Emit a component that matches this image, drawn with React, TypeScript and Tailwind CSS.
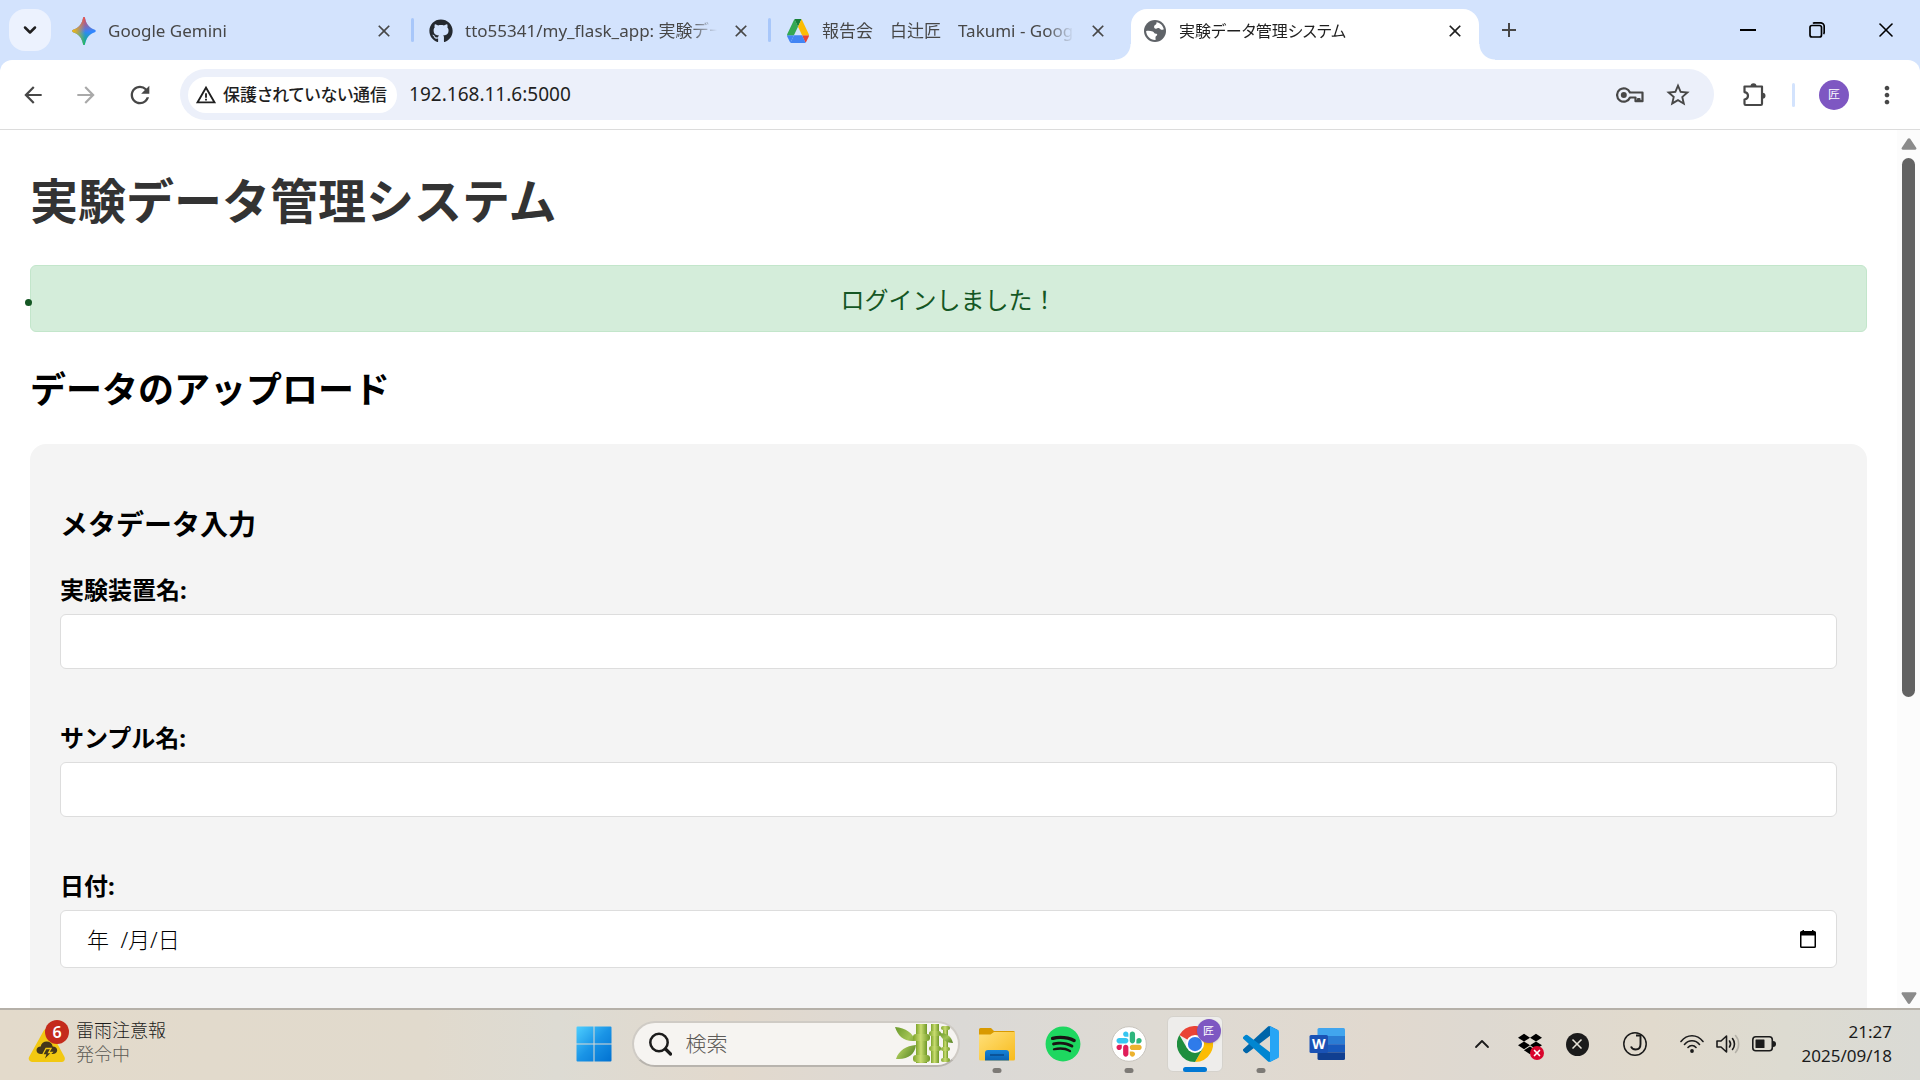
import React from "react";
import { FaGithub, FaSpotify, FaDropbox } from "react-icons/fa";
import { MdStarBorder, MdRefresh, MdArrowBack, MdArrowForward, MdWarningAmber, MdMoreVert, MdClose, MdAdd } from "react-icons/md";
import { ChevronDown, ChevronUp, X } from "lucide-react";

const UI_FONT = "font-['Noto_Sans','Noto_Sans_CJK_JP',sans-serif]";

function GeminiIcon() {
  return (
    <svg viewBox="0 0 24 24" className="h-7 w-6" preserveAspectRatio="none" aria-hidden="true">
      <defs>
        <linearGradient id="gem-a" x1="0" y1="0.5" x2="0.55" y2="0.5">
          <stop offset="0" stopColor="#fbbc04" />
          <stop offset="1" stopColor="#fbbc04" stopOpacity="0" />
        </linearGradient>
        <linearGradient id="gem-b" x1="0.5" y1="0" x2="0.6" y2="0.55">
          <stop offset="0" stopColor="#f94543" />
          <stop offset="1" stopColor="#f94543" stopOpacity="0" />
        </linearGradient>
        <linearGradient id="gem-c" x1="0.5" y1="1" x2="0.6" y2="0.5">
          <stop offset="0" stopColor="#0ebc5f" />
          <stop offset="1" stopColor="#0ebc5f" stopOpacity="0" />
        </linearGradient>
      </defs>
      {["#3186ff", "url(#gem-c)", "url(#gem-b)", "url(#gem-a)"].map((fill) => (
        <path key={fill} fill={fill} d="M12 0c.7 0 .9.6 1.1 1.3.5 2 1.300 3.900 2.800 5.600 1.700 1.900 3.800 3.200 6.300 3.900.8.2 1.500.4 1.500 1.200s-.7 1-1.500 1.200c-2.500.7-4.600 2-6.300 3.900-1.500 1.700-2.300 3.600-2.800 5.600-.2.700-.4 1.300-1.100 1.300s-.9-.6-1.100-1.300c-.5-2-1.300-3.900-2.800-5.600-1.700-1.900-3.800-3.200-6.300-3.900C1 13 .3 12.800.3 12s.7-1 1.500-1.200c2.500-.7 4.600-2 6.300-3.900 1.500-1.700 2.300-3.600 2.800-5.600C11.100.6 11.300 0 12 0z" />
      ))}
    </svg>
  );
}

function DriveIcon() {
  return (
    <svg viewBox="0 0 87.3 78" className="h-6 w-[22px]" preserveAspectRatio="none" aria-hidden="true">
      <path fill="#4285f4" d="M6.600 66.850l3.850 6.650c.8 1.400 1.950 2.500 3.300 3.300l13.750-23.800H0c0 1.550.4 3.100 1.200 4.500z" />
      <path fill="#34a853" d="M43.650 25L29.900 1.200c-1.350.8-2.500 1.900-3.300 3.300L1.200 48.500A9 9 0 0 0 0 53h27.500z" />
      <path fill="#ea4335" d="M73.550 76.800c1.350-.8 2.500-1.900 3.300-3.300l9.250-16c.8-1.400 1.200-2.950 1.200-4.500H59.800l5.850 11.500z" />
      <path fill="#188038" d="M43.650 25L57.400 1.200C56.050.4 54.500 0 52.900 0H34.400c-1.600 0-3.150.45-4.500 1.200z" />
      <path fill="#4285f4" d="M59.800 53H27.500L13.750 76.800c1.350.8 2.900 1.200 4.500 1.200h50.800c1.600 0 3.150-.45 4.500-1.200z" />
      <path fill="#fbbc04" d="M73.400 26.500l-12.700-22c-.8-1.400-1.950-2.500-3.300-3.300L43.650 25 59.800 53h27.450c0-1.550-.4-3.100-1.200-4.500z" />
    </svg>
  );
}

function GlobeIcon() {
  return (
    <svg viewBox="0 0 24 24" className="size-6" aria-hidden="true">
      <circle cx="12" cy="12" r="11" fill="#5f6368" />
      <path fill="#fff" d="M13.500 3.200c3.600.6 6.500 3.400 7.300 7-1 .5-2 .8-3 .4-.9-.4-1-1.400-2-1.500-1.300-.1-1.700.9-3 .7-1.300-.2-1.900-1.300-1.700-2.400.2-1.300 1.800-1.300 2.200-2.300.2-.6.100-1.300.2-1.900zM3.100 12c2.200-.3 4.600-.2 6.600.5 1.400.5 1.200 1.700 2.400 2.100 1 .3 1.900.1 2.100 1 .2 1.100-1.400 1.400-1.700 2.500-.2.900.2 1.800.1 2.800-5 .3-9.300-3.700-9.500-8.900z" />
    </svg>
  );
}

function KeyIcon() {
  return (
    <svg viewBox="0 0 28 16" className="h-4 w-7" aria-hidden="true">
      <path fill="none" stroke="#474747" strokeWidth="2.200" strokeLinejoin="round" d="M14 5.500a6.700 6.700 0 1 0 0 5h5.500v3.700h2.500V12h1.500v2.200h3V5.500z" />
      <circle cx="7.800" cy="8" r="3" fill="#474747" />
    </svg>
  );
}

function PuzzleIcon() {
  return (
    <svg viewBox="0 0 28 28" className="size-7" aria-hidden="true">
      <path fill="none" stroke="#474747" strokeWidth="2.200" strokeLinejoin="round" d="M4.500 5.500H22v17.300c0 .8-.4 1.200-1.200 1.200H5.700c-.8 0-1.200-.4-1.200-1.200v-4.300c2.200-.3 3.500-1.700 3.500-3.700s-1.300-3.400-3.500-3.700z" />
      <path fill="#474747" d="M10.500 5.200a3 3 0 0 1 6 0zM22.500 11.800a3 3 0 0 1 0 6z" />
    </svg>
  );
}

function WeatherIcon() {
  return (
    <svg viewBox="0 0 44 44" className="size-11" aria-hidden="true">
      <path fill="#f2c811" d="M15.800 10.500c1.500-2.400 4.900-2.400 6.300 0l14.300 26.300c1.200 2.300 0 5.200-2.700 5.200H4c-2.600 0-4.200-2.900-2.800-5.200z" />
      <path fill="#43371b" d="M13 34c-2.700 0-4.500-1.600-4.500-3.800s1.800-3.800 4.200-3.800c.6-3.200 3-5 6-5s5.500 1.800 6 5c2.600 0 4.500 1.600 4.500 3.800S27.300 34 24.700 34z" />
      <path fill="#43371b" stroke="#f2c811" strokeWidth="1.300" d="M18 28.500h5l-2.300 4h3.300L15.500 41l2-6h-3z" />
      <circle cx="29" cy="12" r="12" fill="#c42b1c" />
      <text x="29" y="17.500" textAnchor="middle" fill="#fff" fontSize="16" fontWeight="600" fontFamily="Noto Sans, sans-serif">6</text>
    </svg>
  );
}

function WindowsIcon() {
  return (
    <svg viewBox="0 0 36 36" className="size-9" aria-hidden="true">
      <defs>
        <linearGradient id="win" gradientUnits="userSpaceOnUse" x1="0" y1="0" x2="36" y2="36">
          <stop offset="0" stopColor="#4fd0ff" />
          <stop offset="0.5" stopColor="#1a94e6" />
          <stop offset="1" stopColor="#0070d0" />
        </linearGradient>
      </defs>
      <path fill="url(#win)" d="M1.500.5h16v17h-17v-16a1 1 0 0 1 1-1zM18.500.5h16a1 1 0 0 1 1 1v16h-17zM.5 18.500h17v17h-16a1 1 0 0 1-1-1zM18.500 18.500h17v16a1 1 0 0 1-1 1h-16z" />
    </svg>
  );
}

function BambooIcon() {
  return (
    <svg viewBox="0 0 60 40" className="h-10 w-[60px]" aria-hidden="true">
      <defs>
        <linearGradient id="stalk" x1="0" x2="1" y1="0" y2="0">
          <stop offset="0" stopColor="#7fa52d" />
          <stop offset="0.45" stopColor="#c9dc70" />
          <stop offset="1" stopColor="#6f9826" />
        </linearGradient>
        <linearGradient id="leaf" x1="0" x2="1" y1="0" y2="1">
          <stop offset="0" stopColor="#6b9a2c" />
          <stop offset="0.5" stopColor="#a3c455" />
          <stop offset="1" stopColor="#4e7d1d" />
        </linearGradient>
      </defs>
      <path fill="url(#leaf)" d="M1 3c11 1 18 6 20 14C10 18 4 12 1 3zM2 35c3-9 10-13 20-14-1 9-8 15-20 14z" />
      <g fill="url(#stalk)">
        <rect x="22" y="0" width="11" height="39" />
        <rect x="19" y="10" width="17" height="7" rx="3" />
        <rect x="19" y="31" width="17" height="7" rx="3" />
        <rect x="37" y="0" width="8" height="39" />
        <rect x="35" y="7" width="12" height="5" rx="2.500" />
        <rect x="35" y="22" width="12" height="5" rx="2.500" />
        <rect x="49" y="2" width="5" height="35" />
        <rect x="47" y="2" width="9" height="4" rx="2" />
        <rect x="47" y="23" width="9" height="4" rx="2" />
        <rect x="47" y="34" width="9" height="4" rx="2" />
      </g>
      <path fill="url(#leaf)" d="M45 9c8 0 12 3 14 10-6 0-11-3-14-10z" />
    </svg>
  );
}

function FolderIcon() {
  return (
    <svg viewBox="0 0 36 36" className="size-9" aria-hidden="true">
      <defs>
        <linearGradient id="folder" x1="0" y1="0" x2="1" y2="1">
          <stop offset="0" stopColor="#ffe07a" />
          <stop offset="1" stopColor="#f8bb1c" />
        </linearGradient>
        <linearGradient id="folder-blue" x1="0" y1="0" x2="0" y2="1">
          <stop offset="0" stopColor="#1683d8" />
          <stop offset="1" stopColor="#0a63b4" />
        </linearGradient>
      </defs>
      <path fill="#d99a00" d="M0 3.500A1.500 1.500 0 0 1 1.500 2H12l3 3h19.500A1.500 1.500 0 0 1 36 6.500V12H0z" />
      <path fill="url(#folder)" d="M0 8.500h11.500L15 6h21v27a1.500 1.500 0 0 1-1.500 1.500h-33A1.500 1.500 0 0 1 0 33z" />
      <path fill="url(#folder-blue)" d="M6 34.500V27a3 3 0 0 1 3-3h18a3 3 0 0 1 3 3v7.500z" />
      <path stroke="#084a8a" strokeWidth="1.500" d="M11 29h14" />
    </svg>
  );
}

function SlackIcon() {
  return (
    <svg viewBox="0 0 36 36" className="size-9" aria-hidden="true">
      <circle cx="18" cy="18" r="17.300" fill="#fff" stroke="#c9c5be" />
      <g transform="translate(5.500 5.500) scale(.205)">
        <path fill="#e01e5a" d="M25.800 77.600c0 7.100-5.800 12.900-12.900 12.900S0 84.700 0 77.600s5.800-12.900 12.900-12.900h12.900zM32.300 77.600c0-7.100 5.800-12.900 12.900-12.900s12.900 5.800 12.900 12.900v32.300c0 7.100-5.800 12.900-12.900 12.900s-12.900-5.800-12.900-12.900z" />
        <path fill="#36c5f0" d="M45.200 25.800c-7.100 0-12.900-5.800-12.900-12.900S38.100 0 45.200 0s12.900 5.800 12.900 12.900v12.900zM45.200 32.300c7.100 0 12.900 5.800 12.900 12.900s-5.800 12.900-12.900 12.900H12.900C5.800 58.100 0 52.300 0 45.200s5.800-12.900 12.900-12.900z" />
        <path fill="#2eb67d" d="M97 45.200c0-7.100 5.800-12.900 12.900-12.900s12.900 5.800 12.900 12.900-5.800 12.900-12.900 12.900H97zM90.500 45.200c0 7.100-5.800 12.900-12.900 12.900s-12.900-5.800-12.900-12.900V12.900C64.700 5.800 70.500 0 77.600 0s12.900 5.800 12.900 12.900z" />
        <path fill="#ecb22e" d="M77.600 97c7.100 0 12.900 5.800 12.900 12.900s-5.800 12.900-12.900 12.900-12.900-5.800-12.900-12.900V97zM77.600 90.500c-7.100 0-12.900-5.800-12.900-12.900s5.800-12.900 12.900-12.900h32.300c7.100 0 12.900 5.800 12.900 12.900s-5.800 12.900-12.900 12.900z" />
      </g>
    </svg>
  );
}

function ChromeIcon() {
  return (
    <svg viewBox="0 0 48 48" className="size-9" aria-hidden="true">
      <path fill="#ea4335" d="M24 24L3.200 12A24 24 0 0 1 44.800 12H24z" />
      <path fill="#fbbc04" d="M24 12h20.800A24 24 0 0 1 24 48l10.400-18z" />
      <path fill="#1e8e3e" d="M3.200 12A24 24 0 0 0 24 48l10.400-18L24 24l-10.400 6z" />
      <circle cx="24" cy="24" r="12" fill="#fff" />
      <circle cx="24" cy="24" r="9.500" fill="#2f7bea" />
    </svg>
  );
}

function VsCodeIcon() {
  return (
    <svg viewBox="0 0 100 100" className="size-9" aria-hidden="true">
      <path fill="#0065a9" d="M96.500 10.800L75.900.9a6.200 6.200 0 0 0-7.100 1.200L1.300 63.600a4.200 4.200 0 0 0 0 6.200l5.500 5a4.200 4.200 0 0 0 5.400.2l81.200-61.700c2.700-2 6.600-.1 6.600 3.300v-.2a6.300 6.300 0 0 0-3.500-5.600z" />
      <path fill="#0086d1" d="M96.500 89.200l-20.600 9.900a6.200 6.200 0 0 1-7.100-1.200L1.300 36.400a4.200 4.200 0 0 1 0-6.200l5.500-5a4.200 4.200 0 0 1 5.400-.2l81.200 61.700c2.700 2 6.600.1 6.600-3.300v.2a6.300 6.300 0 0 1-3.500 5.600z" />
      <path fill="#27a5f5" d="M75.900 99.100a6.200 6.200 0 0 1-7.100-1.200c2.300 2.300 6.200.7 6.200-2.600V4.700c0-3.300-3.900-4.900-6.200-2.600A6.200 6.200 0 0 1 75.900.9l20.600 9.900A6.200 6.200 0 0 1 100 16.400v67.200c0 2.400-1.400 4.600-3.500 5.600z" />
    </svg>
  );
}

function WordIcon() {
  return (
    <svg viewBox="0 0 36 36" className="size-9" aria-hidden="true">
      <path fill="#41a5ee" d="M10 2h24.500A1.500 1.500 0 0 1 36 3.500V10H8.500V3.500A1.500 1.500 0 0 1 10 2z" />
      <path fill="#2b7cd3" d="M8.500 10H36v8.200H8.500z" />
      <path fill="#185abd" d="M8.500 18.200H36v8H8.500z" />
      <path fill="#103f91" d="M8.500 26.200H36v6.300a1.500 1.500 0 0 1-1.500 1.500H10a1.500 1.500 0 0 1-1.500-1.500z" />
      <rect x="0.500" y="9" width="18.500" height="18" rx="1.500" fill="#1a52b5" />
      <text x="9.700" y="23" textAnchor="middle" fill="#fff" fontSize="14" fontWeight="700" fontFamily="Open Sans, sans-serif">W</text>
    </svg>
  );
}

function WifiIcon() {
  return (
    <svg viewBox="0 0 24 20" className="h-5 w-6" fill="none" stroke="#1b1b1b" strokeWidth="1.600" strokeLinecap="round" aria-hidden="true">
      <path d="M1 7.500C7-.2 17-.2 23 7.500M4.500 10.500c4-5 11-5 15 0M8 13.500c2.200-2.700 5.800-2.700 8 0" />
      <circle cx="12" cy="17" r="1.900" fill="#1b1b1b" stroke="none" />
    </svg>
  );
}

function VolumeIcon() {
  return (
    <svg viewBox="0 0 24 20" className="h-5 w-6" fill="none" stroke="#1b1b1b" strokeWidth="1.600" strokeLinecap="round" strokeLinejoin="round" aria-hidden="true">
      <path d="M1 7h4l5.500-5v16L5 13H1zM13.500 7c1.300 1.800 1.300 4.200 0 6M16.500 4.500c2.600 3.200 2.600 7.800 0 11" />
      <path stroke="#b4b1a8" d="M19.500 1.500c4.200 4.700 4.200 12.300 0 17" />
    </svg>
  );
}

function BatteryIcon() {
  return (
    <svg viewBox="0 0 24 16" className="h-4 w-6" aria-hidden="true">
      <rect x="0.800" y="0.800" width="19.500" height="14" rx="3" fill="none" stroke="#1b1b1b" strokeWidth="1.600" />
      <rect x="3.500" y="3.500" width="9" height="8.600" rx="0.500" fill="#1b1b1b" />
      <path fill="#1b1b1b" d="M21 5c2 0 3 1 3 3s-1 3-3 3z" />
    </svg>
  );
}

function DateIcon() {
  return (
    <svg viewBox="0 0 16 18" className="h-[18px] w-4" aria-hidden="true">
      <path fill="#000" d="M0 2.500A1.500 1.500 0 0 1 1.500 1H2.500V0H4v1h8V0h1.500v1h1A1.500 1.500 0 0 1 16 2.500v14a1.500 1.500 0 0 1-1.500 1.500h-13A1.500 1.500 0 0 1 0 16.500zM1.500 5.500v11h13v-11z" />
    </svg>
  );
}

type TabProps = { title: string; icon: React.ReactNode; active?: boolean; separator?: boolean };

function Tab({ title, icon, active, separator }: TabProps) {
  return (
    <div className={`relative flex h-[51px] max-w-[357px] min-w-0 flex-1 items-center pr-4 pb-2 pl-[17px] ${active ? "text-base text-[#1f1f1f]" : "text-[17px] text-[#474747]"}`}>
      {active && (
        <div className="absolute inset-y-0 right-1 left-[5px] rounded-t-2xl bg-white">
          <span className="absolute bottom-0 -left-4 size-4 bg-[radial-gradient(circle_at_0_0,transparent_15px,white_16px)]" />
          <span className="absolute -right-4 bottom-0 size-4 bg-[radial-gradient(circle_at_100%_0,transparent_15px,white_16px)]" />
        </div>
      )}
      <button role="tab" aria-selected={!!active} className="relative flex h-full min-w-0 flex-1 items-center gap-3 text-left">
        <span className="flex w-6 shrink-0 justify-center">{icon}</span>
        <span className="min-w-0 flex-1 overflow-hidden leading-6 whitespace-nowrap [font-feature-settings:'palt'] [mask-image:linear-gradient(to_right,black_calc(100%-28px),transparent)]">{title}</span>
      </button>
      <button aria-label="タブを閉じる" className="relative ml-3 flex size-6 shrink-0 items-center justify-center">
        <MdClose className="size-5" />
      </button>
      {separator && <span className="absolute top-[9px] -right-0.5 h-6 w-[3px] rounded bg-[#a8c7fa]" />}
    </div>
  );
}

function TabStrip() {
  return (
    <header className="flex h-[60px] shrink-0 items-end bg-[#d3e3fd]">
      <button aria-label="タブを検索" className="mb-[9px] ml-[9px] flex size-[42px] shrink-0 items-center justify-center rounded-2xl bg-[#ecf2fe]">
        <ChevronDown className="size-5 text-[#1f1f1f]" strokeWidth={3} />
      </button>
      <div role="tablist" className="ml-1 flex min-w-0 flex-1 items-end">
        <Tab title="Google Gemini" icon={<GeminiIcon />} separator />
        <Tab title="tto55341/my_flask_app: 実験データ管理システム" icon={<FaGithub className="size-6 text-[#24292f]" />} separator />
        <Tab title="報告会　白辻匠　Takumi - Google ドライブ" icon={<DriveIcon />} />
        <Tab title="実験データ管理システム" icon={<GlobeIcon />} active />
        <button aria-label="新しいタブ" className="mb-[18px] ml-[14px] flex size-6 shrink-0 items-center justify-center text-[#474747]">
          <MdAdd className="size-6" />
        </button>
      </div>
      <div className="flex h-full shrink-0 text-black">
        <button aria-label="最小化" className="flex w-[69px] items-center justify-center">
          <span className="h-[2px] w-4 bg-black" />
        </button>
        <button aria-label="元に戻す" className="flex w-[69px] items-center justify-center">
          <svg viewBox="0 0 16 16" className="size-4" fill="none" stroke="black" strokeWidth="1.700">
            <rect x="1" y="3.500" width="11.500" height="11.500" rx="2" />
            <path d="M4 1.500c.5-.5 1-.7 2-.7h5.500a3.700 3.700 0 0 1 3.700 3.700V10c0 1-.2 1.600-.7 2" />
          </svg>
        </button>
        <button aria-label="閉じる" className="flex w-[69px] items-center justify-center">
          <X className="size-6" strokeWidth={1.600} />
        </button>
      </div>
    </header>
  );
}

function Toolbar() {
  return (
    <div className="shrink-0 bg-[#d3e3fd]">
      <nav className="flex h-[70px] items-center rounded-t-xl border-b border-[#dcdcdc] bg-white text-[#474747]">
        <div className="ml-5 flex gap-[27px]">
          <button aria-label="戻る"><MdArrowBack className="size-[26px]" /></button>
          <button aria-label="進む" className="text-[#a9a9a9]"><MdArrowForward className="size-[26px]" /></button>
          <button aria-label="再読み込み"><MdRefresh className="size-7" /></button>
        </div>
        <div className="mr-[26px] ml-[26px] flex h-[51px] min-w-0 flex-1 items-center rounded-full bg-[#ecf0fa] pr-[22px] pl-2">
          <button className="flex h-9 shrink-0 items-center gap-1.5 rounded-full bg-white pr-2.5 pl-[7px] text-[17px] font-medium text-[#1f1f1f] [font-feature-settings:'palt']">
            <MdWarningAmber className="size-[22px]" />
            保護されていない通信
          </button>
          <input aria-label="アドレス" defaultValue="192.168.11.6:5000" className="ml-3 min-w-0 flex-1 bg-transparent text-[19px] text-[#1f1f1f] outline-none" />
          <div className="flex shrink-0 items-center gap-5">
            <button aria-label="パスワード"><KeyIcon /></button>
            <button aria-label="ブックマーク"><MdStarBorder className="size-7" /></button>
          </div>
        </div>
        <button aria-label="拡張機能"><PuzzleIcon /></button>
        <span className="ml-6 h-6 w-[3px] rounded bg-[#d3e3fd]" />
        <button aria-label="プロフィール" className="ml-6 flex size-[30px] items-center justify-center rounded-full bg-[#7e57c2] text-xs text-white">匠</button>
        <button aria-label="メニュー" className="mr-[19px] ml-6"><MdMoreVert className="size-7" /></button>
      </nav>
    </div>
  );
}

type FieldProps = { id: string; label: string };

function Field({ id, label }: FieldProps) {
  return (
    <div className="mb-[51px]">
      <label htmlFor={id} className="mb-1.5 block text-2xl leading-9 font-bold">{label}</label>
      <input id={id} type="text" className="block h-[55px] w-full rounded-md border border-[#ddd] bg-white px-3 text-xl" />
    </div>
  );
}

function PageContent() {
  return (
    <main className="flex min-w-0 flex-1 flex-col overflow-hidden px-[30px] text-black">
      <h1 className="mt-9 text-5xl leading-[70px] font-bold text-[#333]">実験データ管理システム</h1>
      <ul className="mt-[29px] text-2xl text-[#155724]">
        <li className="relative rounded-md border border-[#c3e6cb] bg-[#d4edda] px-4 pt-4 pb-[13px] text-center leading-9">
          <span className="absolute top-[33px] -left-[6px] size-[7px] rounded-full bg-[#155724]" />
          ログインしました！
        </li>
      </ul>
      <h2 className="mt-8 text-4xl leading-[52px] font-bold">データのアップロード</h2>
      <form className="mt-7 flex-1 rounded-t-2xl bg-[#f4f4f4] px-[30px] pt-[60px]">
        <h3 className="text-[28px] leading-10 font-bold">メタデータ入力</h3>
        <div className="mt-7">
          <Field id="device" label="実験装置名:" />
          <Field id="sample" label="サンプル名:" />
          <label htmlFor="date" className="mb-1.5 block text-2xl leading-9 font-bold">日付:</label>
          <div className="flex h-[58px] items-center rounded-md border border-[#ddd] bg-white pr-5 pl-[26px]">
            <input id="date" type="text" defaultValue="年  /月/日" className="min-w-0 flex-1 bg-transparent text-[22px] font-light outline-none" />
            <button type="button" aria-label="日付を選択"><DateIcon /></button>
          </div>
        </div>
      </form>
    </main>
  );
}

function ScrollBar() {
  return (
    <div className="flex w-[23px] shrink-0 flex-col items-center bg-[#fcfcfc] py-1" aria-hidden="true">
      <svg viewBox="0 0 16 12" className="mt-1 h-3 w-4" fill="#8b8b8b"><path d="M6.800.8c.6-.9 1.800-.9 2.400 0l6 9c.6.9.1 1.900-1 1.900H1.800c-1.100 0-1.600-1-1-1.900z" /></svg>
      <span className="mt-2 h-[62%] w-[13px] rounded-full bg-[#636363]" />
      <svg viewBox="0 0 16 12" className="mt-auto h-3 w-4" fill="#8b8b8b"><path d="M6.800 11.200c.6.900 1.800.9 2.400 0l6-9c.6-.9.100-1.900-1-1.900H1.800c-1.100 0-1.600 1-1 1.900z" /></svg>
    </div>
  );
}

type AppButtonProps = { label: string; children: React.ReactNode; running?: boolean; active?: boolean };

function AppButton({ label, children, running, active }: AppButtonProps) {
  return (
    <button aria-label={label} className={`relative flex size-14 items-center justify-center rounded-md ${active ? "border border-[#d5d2cc] bg-[#eeedeb]" : ""}`}>
      {children}
      {running && <span className="absolute -bottom-px left-1/2 h-[5px] w-[9px] -translate-x-1/2 rounded-full bg-[#7d7a76]" />}
      {active && <span className="absolute -bottom-px left-1/2 h-[5px] w-6 -translate-x-1/2 rounded-full bg-[#0078d4]" />}
    </button>
  );
}

function Taskbar() {
  return (
    <footer className="grid h-[72px] shrink-0 grid-cols-[1fr_auto_1fr] items-center border-t-2 border-[#b5b0a8] bg-[linear-gradient(90deg,#e3dacb_0%,#e1dacd_22%,#dddbd3_29%,#e2d9cd_38%,#dbd9d6_50%,#dedad3_60%,#e1d9cf_72%,#ded9d1_77%,#e1dacd_86%,#dddbd1_93%,#dadad5_100%)] pb-0.5">
      <button className="ml-7 flex items-center gap-1 justify-self-start pb-1 text-left">
        <WeatherIcon />
        <span className="flex flex-col text-lg leading-6 font-light text-[#1b1b1b]">
          <span>雷雨注意報</span>
          <span className="text-[#5d5a55]">発令中</span>
        </span>
      </button>
      <div className="flex items-center pl-[10px]">
        <button aria-label="スタート"><WindowsIcon /></button>
        <label className="ml-5 flex h-[46px] w-[328px] items-center rounded-full border-2 border-[#cfcbc5] border-b-[#b8b4ae] bg-[#f6f4f1] pr-1 pl-3.5">
          <svg viewBox="0 0 24 24" className="size-6" fill="none" stroke="#1b1b1b" strokeWidth="2.500" strokeLinecap="round" aria-hidden="true">
            <circle cx="11" cy="10.500" r="8.700" />
            <path d="M17.500 17l5 5" strokeWidth="3.200" />
          </svg>
          <input aria-label="検索" placeholder="検索" className="ml-3.5 min-w-0 flex-1 bg-transparent text-[21px] font-light outline-none placeholder:text-[#5d5a57]" />
          <BambooIcon />
        </label>
        <div className="ml-[9px] flex gap-[10px]">
          <AppButton label="エクスプローラー" running><FolderIcon /></AppButton>
          <AppButton label="Spotify">
            <span className="flex size-7 items-center justify-center rounded-full bg-[#191414]"><FaSpotify className="size-9 shrink-0 text-[#1ed760]" /></span>
          </AppButton>
          <AppButton label="Slack" running><SlackIcon /></AppButton>
          <AppButton label="Chrome" active>
            <ChromeIcon />
            <span className="absolute top-[2px] right-px flex size-6 items-center justify-center rounded-full bg-[#7e57c2] text-[11px] text-white shadow-sm">匠</span>
          </AppButton>
          <AppButton label="Visual Studio Code" running><VsCodeIcon /></AppButton>
          <AppButton label="Word"><WordIcon /></AppButton>
        </div>
      </div>
      <div className="mr-7 flex items-center justify-self-end text-[#1b1b1b]">
        <button aria-label="隠れているインジケーター"><ChevronUp className="size-6" strokeWidth={1.800} /></button>
        <button aria-label="Dropbox" className="relative ml-6 size-6">
          <FaDropbox className="size-6 text-black" />
          <span className="absolute -right-0.5 -bottom-1 flex size-[14px] items-center justify-center rounded-full bg-[#d9052c] text-white"><X className="size-[10px]" strokeWidth={4} /></span>
        </button>
        <button aria-label="同期停止" className="ml-6 flex size-[23px] items-center justify-center rounded-full bg-[#1b1b1b] text-[#e6e2d8]"><X className="size-4" strokeWidth={2.500} /></button>
        <button aria-label="入力" className="ml-[34px]">
          <svg viewBox="0 0 24 24" className="size-6" fill="none" stroke="#1b1b1b" strokeWidth="1.500" aria-hidden="true">
            <circle cx="12" cy="12" r="11.200" />
            <path strokeWidth="1.900" d="M13 3.500h4.500V12c0 3.500-1.800 5.500-4.800 5.500-2.300 0-4-1-4.700-3" />
          </svg>
        </button>
        <button aria-label="ネットワークと音量" className="ml-[33px] flex items-center gap-3">
          <WifiIcon />
          <VolumeIcon />
          <BatteryIcon />
        </button>
        <button className="ml-[26px] text-right text-[17px] leading-6">
          <span className="block">21:27</span>
          <span className="block">2025/09/18</span>
        </button>
      </div>
    </footer>
  );
}

export default function App() {
  return (
    <div lang="ja" className={`flex h-screen flex-col overflow-hidden bg-white ${UI_FONT}`}>
      <TabStrip />
      <Toolbar />
      <div className="flex min-h-0 flex-1">
        <PageContent />
        <ScrollBar />
      </div>
      <Taskbar />
    </div>
  );
}
